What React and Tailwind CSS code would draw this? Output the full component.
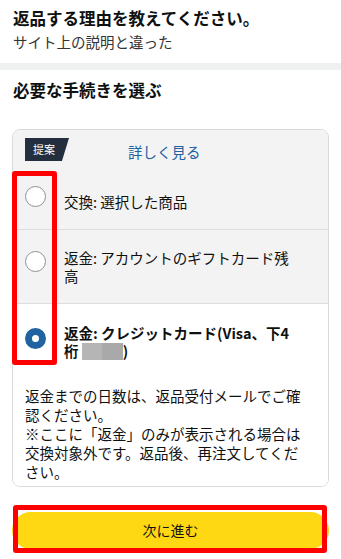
const Radio = ({ checked, className = '' }) =>
  checked ? (
    <span className={`shrink-0 w-[21px] h-[21px] rounded-full border-[7px] border-[#2162a1] bg-white ${className}`} />
  ) : (
    <span className={`shrink-0 w-[21px] h-[21px] rounded-full border border-[#8d9096] bg-white ${className}`} />
  );

export default function App() {
  return (
    <div className="relative w-[341px] h-[559px] bg-white overflow-hidden text-[#0f1111] font-['Noto_Sans_CJK_JP',sans-serif]">
      <div className="px-[13px] pt-[7px] pb-[11px]">
        <h1 className="text-[16.5px] leading-[22px] font-bold">返品する理由を教えてください。</h1>
        <p className="mt-[3px] text-[14.5px] leading-[20px] text-[#333]">サイト上の説明と違った</p>
      </div>
      <div className="h-[7px] bg-[#eff0f0]" />

      <h2 className="px-[13px] pt-[9px] text-[16.5px] leading-[22px] font-bold">必要な手続きを選ぶ</h2>

      <div className="mx-3 mt-[28px] border border-[#d9dbdb] rounded-lg overflow-hidden">
        <div className="bg-[#f3f3f3]">
          <div className="flex items-start px-3 pt-2">
            <div className="w-[44px] h-[23px] bg-[#232f3e] text-white text-[11px] leading-[23px] pl-2 [clip-path:polygon(0_0,100%_0,84%_100%,0_100%)]">
              提案
            </div>
            <a className="ml-[59px] mt-[4px] text-[14.5px] leading-[20px] text-[#2162a1]">詳しく見る</a>
          </div>

          <div className="flex items-start px-3 pt-[24px] pb-[18px]">
            <Radio />
            <p className="ml-[18px] mt-[7px] w-[233px] text-[14.5px] leading-[18px]">交換: 選択した商品</p>
          </div>

          <div className="flex items-start px-3 pt-[19px] pb-[18px] border-t border-[#dcdede]">
            <Radio className="mt-[2px]" />
            <p className="ml-[18px] w-[233px] text-[14.5px] leading-[18px]">返金: アカウントのギフトカード残高</p>
          </div>
        </div>

        <div className="bg-white border-t border-[#dcdede] px-3 pt-[20px] pb-[5px]">
          <div className="flex items-start">
            <Radio checked className="mt-[4px]" />
            <p className="ml-[18px] w-[236px] text-[14.5px] leading-[18px] font-bold">
              返金: クレジットカード(Visa、下4桁{' '}
              <span className="inline-flex align-[-3px] h-[17px]">
                <span className="w-[20px] bg-[#b5b5b5]" />
                <span className="w-[21px] bg-[#a9a9a9]" />
              </span>
              )
            </p>
          </div>
          <p className="mt-[26px] w-[282px] text-[14.5px] leading-[19px]">
            返金までの日数は、返品受付メールでご確認ください。
            <br />
            ※ここに「返金」のみが表示される場合は交換対象外です。返品後、再注文してください。
          </p>
        </div>
      </div>

      <button className="block mx-3 mt-[25px] w-[317px] h-[37px] rounded-full bg-[#fed813] text-[14px] text-[#0f1111]">
        次に進む
      </button>

      <div className="absolute left-[12px] top-[171px] w-[45px] h-[194px] border-[5px] border-[#ff0000] rounded-[3px]" />
      <div className="absolute left-[13px] top-[505px] w-[314px] h-[48px] border-[5px] border-[#ff0000] rounded-[3px]" />
    </div>
  );
}
